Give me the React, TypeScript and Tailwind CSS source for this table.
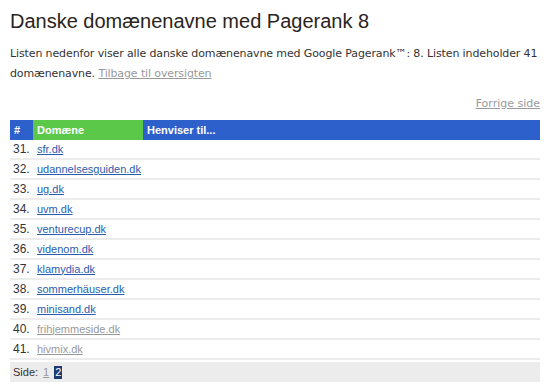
import React from "react";

const rows: { n: number; d: string; visited?: boolean }[] = [
  { n: 31, d: "sfr.dk" },
  { n: 32, d: "udannelsesguiden.dk" },
  { n: 33, d: "ug.dk" },
  { n: 34, d: "uvm.dk" },
  { n: 35, d: "venturecup.dk" },
  { n: 36, d: "videnom.dk" },
  { n: 37, d: "klamydia.dk" },
  { n: 38, d: "sommerhäuser.dk" },
  { n: 39, d: "minisand.dk" },
  { n: 40, d: "frihjemmeside.dk", visited: true },
  { n: 41, d: "hivmix.dk", visited: true },
];

export default function App() {
  return (
    <div className="w-[550px] h-[392px] bg-white overflow-hidden px-[10px] pt-[9px]">
      <h1 className="text-[20px] leading-[24px] text-[#2a2420] font-['Liberation_Sans',Arial,sans-serif]">
        Danske domænenavne med Pagerank 8
      </h1>
      <p className="mt-[11px] text-[11px] leading-[20px] text-[#333] font-['DejaVu_Sans',Verdana,sans-serif] tracking-[-0.12px]">
        <span className="whitespace-nowrap">
          Listen nedenfor viser alle danske domænenavne med Google Pagerank™: 8. Listen indeholder 41
        </span>
        <br />
        domænenavne. <a className="text-[#999] underline">Tilbage til oversigten</a>
      </p>
      <div className="mt-[12px] flex justify-end text-[11px] leading-[16px] font-['DejaVu_Sans',Verdana,sans-serif]">
        <a className="text-[#999] underline">Forrige side</a>
      </div>
      <div className="mt-[8px] w-[530px] font-['Liberation_Sans',Arial,sans-serif] text-[11px]">
        <div className="flex h-[20px] items-center text-white font-bold">
          <div className="w-[23px] h-full bg-[#2e60cb] pl-[4px] flex items-center">#</div>
          <div className="w-[110px] h-full bg-[#5cc84a] pl-[4px] flex items-center">Domæne</div>
          <div className="flex-1 h-full bg-[#2e60cb] pl-[4px] flex items-center">Henviser til...</div>
        </div>
        {rows.map((r) => (
          <div key={r.n} className="flex h-[20px] items-center border-b-2 border-[#ececec] text-[#333] text-[12px]">
            <div className="w-[27px] pl-[3px]">{r.n}.</div>
            <a className={(r.visited ? "text-[#999]" : "text-[#2a5db0]") + " underline text-[11px]"}>{r.d}</a>
          </div>
        ))}
        <div className="mt-[2px] flex h-[20px] items-center bg-[#ececec] pl-[3px] text-[#333] text-[11px]">
          <span>Side:</span>
          <a className="ml-[5px] text-[#999] underline">1</a>
          <span className="ml-[5px] bg-[#1d3b70] text-white px-[1px] leading-[13px]">2</span>
        </div>
      </div>
    </div>
  );
}
